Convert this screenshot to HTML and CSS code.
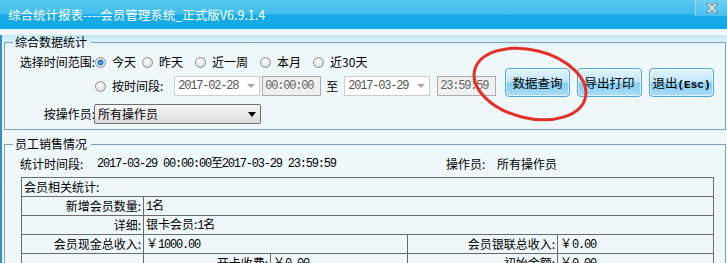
FILE: index.html
```html
<!DOCTYPE html>
<html lang="zh-CN">
<head>
    <meta charset="UTF-8">
    <meta name="viewport" content="width=device-width, initial-scale=1.0">
    <title>综合统计报表</title>
    <link rel="stylesheet" href="styles.css">
</head>
<body>
    <div class="titlebar">
        <span class="title">综合统计报表----会员管理系统_正式版V6.9.1.4</span>
        <button type="button" class="close">
            <svg width="12" height="10" viewBox="0 0 12 10"><path d="M0.5 0.5h3.2l2.3 2.8 2.3-2.8h3.2l-3.8 4.5 3.8 4.5h-3.2l-2.3-2.8-2.3 2.8h-3.2l3.8-4.5z" fill="#e9e9e9" stroke="#7c7c7c" stroke-width="0.8"/></svg>
        </button>
    </div>

    <div class="main">
        <fieldset class="group query">
            <legend>综合数据统计</legend>
            <div class="query-body">
                <div class="filters">
                    <div class="row">
                        <span class="label">选择时间范围:</span>
                        <label class="opt first"><input type="radio" name="range" checked>今天</label>
                        <label class="opt"><input type="radio" name="range">昨天</label>
                        <label class="opt"><input type="radio" name="range">近一周</label>
                        <label class="opt"><input type="radio" name="range">本月</label>
                        <label class="opt"><input type="radio" name="range">近30天</label>
                    </div>
                    <div class="row second">
                        <span class="label"></span>
                        <label class="opt"><input type="radio" name="range">按时间段:</label>
                        <div class="date mono">2017-02-28<span class="arrow"></span></div>
                        <div class="time mono">00:00:00</div>
                        <span class="to">至</span>
                        <div class="date mono">2017-03-29<span class="arrow"></span></div>
                        <div class="time last mono">23:59:59</div>
                    </div>
                    <div class="row third">
                        <span class="label">按操作员:</span>
                        <div class="select">所有操作员<span class="caret"></span></div>
                    </div>
                </div>
                <div class="actions">
                    <button type="button" class="btn">数据查询</button>
                    <button type="button" class="btn">导出打印</button>
                    <button type="button" class="btn">退出<small>(Esc)</small></button>
                </div>
            </div>
        </fieldset>

        <fieldset class="group sales">
            <legend>员工销售情况</legend>
            <div class="info">
                <span class="k1">统计时间段:</span>
                <span class="v1 mono">2017-03-29 00:00:00至2017-03-29 23:59:59</span>
                <span class="k2">操作员:</span>
                <span>所有操作员</span>
            </div>
            <table class="stats">
                <colgroup>
                    <col class="c1"><col class="c2"><col class="c3"><col class="c4"><col class="c5">
                </colgroup>
                <tr><td colspan="5">会员相关统计:</td></tr>
                <tr><td class="r">新增会员数量:</td><td colspan="4"><span class="mono">1</span>名</td></tr>
                <tr><td class="r">详细:</td><td colspan="4">银卡会员:<span class="mono">1</span>名</td></tr>
                <tr>
                    <td class="r">会员现金总收入:</td><td colspan="2">￥<span class="mono">1000.00</span></td>
                    <td class="r">会员银联总收入:</td><td>￥<span class="mono">0.00</span></td>
                </tr>
                <tr>
                    <td></td><td class="r">开卡收费:</td><td>￥<span class="mono">0.00</span></td>
                    <td class="r">初始金额:</td><td>￥<span class="mono">0.00</span></td>
                </tr>
            </table>
        </fieldset>
    </div>

    <svg class="mark" width="727" height="263" viewBox="0 0 727 263">
        <ellipse cx="530" cy="84" rx="57" ry="34" transform="rotate(14 530 84)" fill="none" stroke="#e5302a" stroke-width="3"/>
    </svg>
</body>
</html>
```

FILE: styles.css
```css
* {
    margin: 0;
    padding: 0;
    box-sizing: border-box;
}

body {
    position: relative;
    width: 727px;
    height: 263px;
    overflow: hidden;
    font-family: "Noto Sans CJK SC", sans-serif;
    font-size: 12px;
    line-height: 1;
    color: #000;
    background: #eef7f9;
}

.mono {
    font-family: "Liberation Mono", "Noto Sans CJK SC", monospace;
    letter-spacing: -1.2px;
}

/* title bar */
.titlebar {
    height: 30px;
    display: flex;
    justify-content: space-between;
    align-items: flex-start;
    background: linear-gradient(#5bc8f1 0, #3fbdee 48%, #16abe6 52%, #12a9e5 100%);
    border-bottom: 1px solid #e4f5fb;
}
.title {
    color: #fff;
    font-size: 12.5px;
    line-height: 29px;
    padding-left: 8px;
}
.close {
    width: 32px;
    height: 16px;
    display: flex;
    align-items: center;
    justify-content: center;
    border: none;
    border-left: 1px solid rgba(255, 255, 255, 0.35);
    background: linear-gradient(#6ccff3, #45c0ef);
}

.main {
    height: 233px;
    padding: 0 1px 0 2px;
    border-left: 2px solid #3a8cc0;
    background: linear-gradient(#c2e9f5 0, #e6f5f9 10px, #eef7f9 14px);
}

/* group boxes */
.group {
    border: 1px solid #7f9fc0;
    padding: 0 6px;
}
.group legend {
    margin-left: 2px;
    padding: 0 4px 0 2px;
    line-height: 14px;
}

.query {
    margin-top: 5px;
    padding-top: 3px;
    padding-bottom: 5px;
}
.query-body {
    display: flex;
}
.filters {
    flex: 0 0 494px;
}
.row {
    display: flex;
    align-items: center;
    height: 20px;
}
.row.second {
    margin-top: 4px;
}
.row.third {
    margin-top: 8px;
}
.label {
    width: 84px;
    text-align: right;
    flex-shrink: 0;
}

.opt {
    display: flex;
    align-items: center;
    margin-right: 12px;
}
.opt.first {
    margin-right: 6px;
}
.opt input {
    appearance: none;
    width: 11px;
    height: 11px;
    margin-right: 6px;
    border: 1px solid #8e8e8e;
    border-radius: 50%;
    background: radial-gradient(circle at 40% 35%, #fff 0, #e4e4e4 60%, #c4c4c4 100%);
}
.opt input:checked {
    background: radial-gradient(circle at 50% 50%, #5fb3ec 0, #1d6fb8 2.5px, #f4f4f4 3.5px, #cfcfcf 100%);
}
.row.second .opt {
    margin-right: 11px;
}

.date {
    width: 86px;
    height: 20px;
    display: flex;
    align-items: center;
    justify-content: space-between;
    padding-left: 3px;
    border: 1px solid #cdcdcd;
    background: #fff;
    color: #555;
}
.date .arrow {
    margin-right: 4px;
    border-top: 4px solid #a8a8a8;
    border-left: 4px solid transparent;
    border-right: 4px solid transparent;
}
.time {
    width: 59px;
    height: 20px;
    display: flex;
    align-items: center;
    padding-left: 2px;
    margin-left: 2px;
    border: 1px solid #ababab;
    background: #f0f0f0;
    color: #666;
}
.time.last {
    margin-left: 7px;
}
.to {
    margin: 0 6px 0 5px;
}

.select {
    width: 167px;
    height: 20px;
    margin-left: -1px;
    display: flex;
    align-items: center;
    justify-content: space-between;
    padding-left: 3px;
    border: 1px solid #6f6f6f;
    border-radius: 2px;
    background: linear-gradient(#f7f7f7, #dcdcdc);
}
.select .caret {
    margin-right: 4px;
    border-top: 5px solid #000;
    border-left: 4px solid transparent;
    border-right: 4px solid transparent;
}

.actions {
    display: flex;
    gap: 7px;
    margin-top: 16px;
    align-self: flex-start;
}
.btn {
    width: 65px;
    height: 29px;
    border: 1px solid #4ea8dc;
    border-radius: 4px;
    background: linear-gradient(#e4f5fd 0, #c1e7f9 45%, #86ccef 55%, #acdef6 100%);
    box-shadow: inset 0 0 0 1px rgba(255, 255, 255, 0.6);
    font-family: "Noto Sans CJK SC", sans-serif;
    font-size: 12.5px;
    color: #000;
}
.btn small {
    font-family: "Liberation Mono", monospace;
    font-weight: bold;
    font-size: 11px;
}

/* sales group */
.sales {
    margin-top: 7px;
    height: 200px;
}
.info {
    display: flex;
    align-items: center;
    height: 20px;
    margin: 3px 0 3px 9px;
}
.info .k1 {
    width: 77px;
}
.info .v1 {
    width: 349px;
}
.info .k2 {
    width: 51px;
}

.stats {
    margin-left: 10px;
    width: 692px;
    table-layout: fixed;
    border-collapse: collapse;
}
.stats .c1 { width: 122px; }
.stats .c2 { width: 127px; }
.stats .c3 { width: 137px; }
.stats .c4 { width: 150px; }
.stats .c5 { width: 156px; }
.stats td {
    height: 19px;
    padding: 0 2px;
    border: 1px solid #6b6b6b;
    white-space: nowrap;
}
.stats td.r {
    text-align: right;
}

.mark {
    position: absolute;
    left: 0;
    top: 0;
    pointer-events: none;
}
```
